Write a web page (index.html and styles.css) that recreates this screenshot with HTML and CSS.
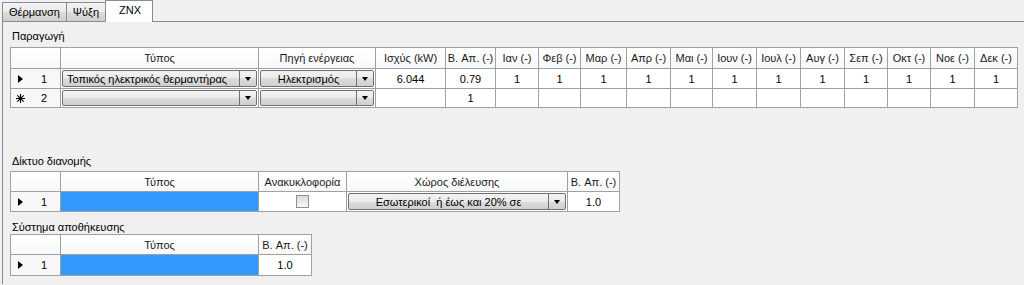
FILE: index.html
```html
<!DOCTYPE html>
<html>
<head>
<meta charset="utf-8">
<link rel="stylesheet" href="styles.css">
</head>
<body>
<div class="tabs">
  <div class="tab">Θέρμανση</div>
  <div class="tab">Ψύξη</div>
  <div class="tab active">ZNX</div>
</div>
<div class="panel">
  <div class="label">Παραγωγή</div>
  <div class="grid g1">
    <div class="ch rhc"></div>
    <div class="ch">Τύπος</div>
    <div class="ch">Πηγή ενέργειας</div>
    <div class="ch">Ισχύς (kW)</div>
    <div class="ch">B. Απ. (-)</div>
    <div class="ch">Ιαν (-)</div>
    <div class="ch">Φεβ (-)</div>
    <div class="ch">Μαρ (-)</div>
    <div class="ch">Απρ (-)</div>
    <div class="ch">Μαι (-)</div>
    <div class="ch">Ιουν (-)</div>
    <div class="ch">Ιουλ (-)</div>
    <div class="ch">Αυγ (-)</div>
    <div class="ch">Σεπ (-)</div>
    <div class="ch">Οκτ (-)</div>
    <div class="ch">Νοε (-)</div>
    <div class="ch">Δεκ (-)</div>

    <div class="rh"><span class="tri"></span><span class="num">1</span></div>
    <div class="cc"><div class="combo"><span class="ctext left">Τοπικός ηλεκτρικός θερμαντήρας</span><span class="cbtn"><span class="arr"></span></span></div></div>
    <div class="cc"><div class="combo"><span class="ctext">Ηλεκτρισμός</span><span class="cbtn"><span class="arr"></span></span></div></div>
    <div class="c">6.044</div>
    <div class="c">0.79</div>
    <div class="c">1</div><div class="c">1</div><div class="c">1</div><div class="c">1</div>
    <div class="c">1</div><div class="c">1</div><div class="c">1</div><div class="c">1</div>
    <div class="c">1</div><div class="c">1</div><div class="c">1</div><div class="c">1</div>

    <div class="rh"><svg class="star" width="9" height="9" viewBox="0 0 9 9"><path d="M4.5 0V9M0 4.5H9M1.3 1.3L7.7 7.7M7.7 1.3L1.3 7.7" stroke="#000" stroke-width="1.1" fill="none"/></svg><span class="num">2</span></div>
    <div class="cc"><div class="combo"><span class="ctext"></span><span class="cbtn"><span class="arr"></span></span></div></div>
    <div class="cc"><div class="combo"><span class="ctext"></span><span class="cbtn"><span class="arr"></span></span></div></div>
    <div class="c"></div>
    <div class="c">1</div>
    <div class="c"></div><div class="c"></div><div class="c"></div><div class="c"></div>
    <div class="c"></div><div class="c"></div><div class="c"></div><div class="c"></div>
    <div class="c"></div><div class="c"></div><div class="c"></div><div class="c"></div>
  </div>

  <div class="label l2">Δίκτυο διανομής</div>
  <div class="grid g2">
    <div class="ch rhc"></div>
    <div class="ch">Τύπος</div>
    <div class="ch">Ανακυκλοφορία</div>
    <div class="ch">Χώρος διέλευσης</div>
    <div class="ch">B. Απ. (-)</div>

    <div class="rh"><span class="tri"></span><span class="num">1</span></div>
    <div class="c sel"></div>
    <div class="c"><span class="chk"></span></div>
    <div class="cc"><div class="combo"><span class="ctext">Εσωτερικοί &nbsp;ή έως και 20% σε</span><span class="cbtn"><span class="arr"></span></span></div></div>
    <div class="c">1.0</div>
  </div>

  <div class="label l3">Σύστημα αποθήκευσης</div>
  <div class="grid g3">
    <div class="ch rhc"></div>
    <div class="ch">Τύπος</div>
    <div class="ch">B. Απ. (-)</div>

    <div class="rh"><span class="tri"></span><span class="num">1</span></div>
    <div class="c sel"></div>
    <div class="c">1.0</div>
  </div>
</div>
</body>
</html>
```

FILE: styles.css
```css
html, body {
  margin: 0;
  padding: 0;
  background: #f0f0f0;
  font-family: "Liberation Sans", Arial, sans-serif;
  font-size: 11px;
  color: #000;
  width: 1024px;
  height: 285px;
  overflow: hidden;
}

.tabs {
  display: flex;
  align-items: flex-end;
  height: 21px;
  padding-left: 2px;
  position: relative;
  z-index: 2;
}

.tab {
  box-sizing: border-box;
  height: 19px;
  padding: 0 6px;
  display: flex;
  align-items: center;
  border: 1px solid #898c95;
  border-bottom: none;
  border-right: none;
  background: linear-gradient(#f3f3f3, #ebebeb 50%, #dddddd 50%, #cfcfcf);
}

.tab:nth-child(2) {
  border-right: 1px solid #898c95;
}

.tab.active {
  height: 22px;
  margin-bottom: -1px;
  margin-left: -1px;
  padding: 0 11px 3px 13px;
  background: #fff;
  border-right: 1px solid #898c95;
  border-left: 1px solid #898c95;
}

.panel {
  margin-left: 2px;
  border-left: 1px solid #898c95;
  border-top: 1px solid #898c95;
  height: 263px;
  padding: 7px 0 0 7px;
  box-sizing: border-box;
}

.label {
  height: 14px;
  line-height: 14px;
  margin: 0 0 4px 2px;
}

.l2 {
  margin-top: 46px;
  margin-bottom: 3px;
}

.l3 {
  margin-top: 8px;
  margin-bottom: 0;
}

.grid {
  display: grid;
  width: max-content;
  border-left: 1px solid #a0a0a0;
  border-top: 1px solid #a0a0a0;
}

.grid > div {
  box-sizing: border-box;
  border-right: 1px solid #a0a0a0;
  border-bottom: 1px solid #a0a0a0;
  display: flex;
  align-items: center;
  justify-content: center;
  white-space: nowrap;
  overflow: hidden;
}

.g1 {
  grid-template-columns: 50px 198px 117px 70px 50px 43px 42px 46px 44px 42px 44px 44px 44px 43px 43px 44px 43px;
  grid-template-rows: 21px 20px 19px;
}

.g2 {
  grid-template-columns: 50px 198px 88px 221px 52px;
  grid-template-rows: 20px 20px;
}

.g3 {
  grid-template-columns: 50px 198px 53px;
  grid-template-rows: 20px 21px;
}

.grid > .ch {
  background: linear-gradient(#ffffff, #f7f8f9);
  color: #1a1a1a;
}

.grid > .rh {
  background: #f7f7f7;
  justify-content: flex-start;
  padding-left: 7px;
}

.grid > .c {
  background: #fff;
}

.grid > .sel {
  background: #3399ff;
}

.grid > .cc {
  background: #fff;
  padding: 1px;
  align-items: stretch;
  justify-content: stretch;
}

.tri {
  width: 0;
  height: 0;
  border-left: 5px solid #000;
  border-top: 4px solid transparent;
  border-bottom: 4px solid transparent;
}

.star {
  margin-left: -2px;
  display: block;
}

.num {
  margin-left: 18px;
}

.star + .num {
  margin-left: 16px;
}

.combo {
  flex: 1;
  display: flex;
  border: 1px solid #707070;
  border-radius: 2px;
  background: linear-gradient(#f2f2f2, #ebebeb 50%, #dddddd 50%, #cfcfcf);
  overflow: hidden;
}

.ctext {
  flex: 1;
  display: flex;
  align-items: center;
  justify-content: center;
  padding: 0 4px;
}

.ctext.left {
  justify-content: flex-start;
}

.cbtn {
  width: 16px;
  border-left: 1px solid #707070;
  display: flex;
  align-items: center;
  justify-content: center;
  background: linear-gradient(#f2f2f2, #ebebeb 50%, #dddddd 50%, #cfcfcf);
}

.arr {
  width: 0;
  height: 0;
  border-top: 4px solid #000;
  border-left: 3.5px solid transparent;
  border-right: 3.5px solid transparent;
}

.chk {
  width: 11px;
  height: 11px;
  border: 1px solid #8e8f8f;
  background: linear-gradient(#dcdcdc, #f7f7f7);
}
```
